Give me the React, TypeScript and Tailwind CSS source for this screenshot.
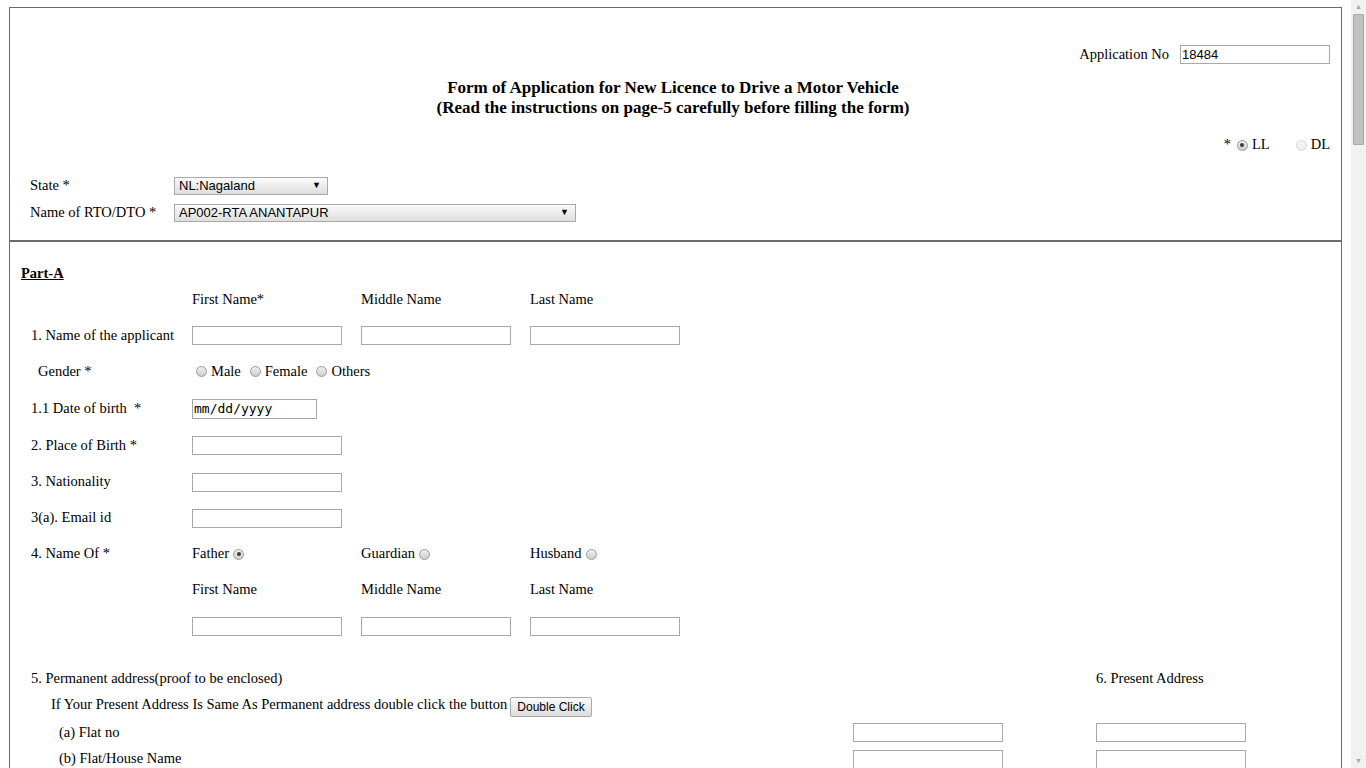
import React from "react";

function Radio({ checked = false, disabled = false }: { checked?: boolean; disabled?: boolean }) {
  return (
    <span
      className={
        "inline-flex items-center justify-center w-[11px] h-[11px] rounded-full border " +
        (disabled
          ? "border-[#d8d8d8] bg-linear-to-b from-[#f7f7f7] to-[#ececec]"
          : "border-[#9a9a9a] bg-linear-to-b from-[#f0f0f0] to-[#cdcdcd]")
      }
    >
      {checked && <span className="w-[4px] h-[4px] rounded-full bg-[#3a3a3a]" />}
    </span>
  );
}

function TextBox({ w = 150, value = "" }: { w?: number; value?: string }) {
  return (
    <input
      readOnly
      value={value}
      style={{ width: w }}
      className="block h-[19px] border border-[#a8a8a8] bg-white px-[1px] text-[13px] text-black font-['Liberation_Sans',_Arial,_sans-serif] outline-none"
    />
  );
}

function Select({ w, value }: { w: number; value: string }) {
  return (
    <div
      style={{ width: w }}
      className="h-[18px] border border-[#a9a9a9] bg-linear-to-b from-[#fbfbfb] to-[#dedede] flex items-center justify-between pl-[4px] pr-[6px] font-['Liberation_Sans',_Arial,_sans-serif] text-[13px] text-black"
    >
      <span>{value}</span>
      <span className="text-[9px] leading-none">▼</span>
    </div>
  );
}

function Row({ h, children, className = "" }: { h: number; children: React.ReactNode; className?: string }) {
  return (
    <div style={{ height: h }} className={"flex items-center " + className}>
      {children}
    </div>
  );
}

export default function App() {
  return (
    <div className="flex h-[768px] overflow-hidden bg-white text-black font-['Liberation_Serif',_'Times_New_Roman',_serif] text-[14.5px]">
      <div className="w-[1351px] pl-[9px] pr-[9px] pt-[7px]">
        {/* Top box */}
        <div className="border-t border-l border-r border-[#6b6b6b] border-b-2 pl-[20px] pr-[11px] pt-[37px] pb-[18px]">
          <div className="flex justify-end items-center h-[19px]">
            <span className="mr-[11px]">Application No</span>
            <TextBox w={150} value="18484" />
          </div>
          <div className="mt-[14px] pr-[14px] text-center font-bold text-[17px] leading-[20px]">
            <div>Form of Application for New Licence to Drive a Motor Vehicle</div>
            <div>(Read the instructions on page-5 carefully before filling the form)</div>
          </div>
          <div className="mt-[17px] h-[20px] flex justify-end items-center">
            <span className="mr-[6px]">*</span>
            <Radio checked />
            <span className="ml-[4px]">LL</span>
            <span className="ml-[26px] flex"><Radio disabled /></span>
            <span className="ml-[4px]">DL</span>
          </div>
          <div className="mt-[21px] flex items-center h-[19px]">
            <span className="w-[144px]">State *</span>
            <Select w={154} value="NL:Nagaland" />
          </div>
          <div className="mt-[8px] flex items-center h-[19px]">
            <span className="w-[144px]">Name of RTO/DTO *</span>
            <Select w={402} value="AP002-RTA ANANTAPUR" />
          </div>
        </div>

        {/* Part A */}
        <div className="border-l border-r border-[#6b6b6b] pl-[11px] pt-[19px] h-[600px]">
          <Row h={26}>
            <span className="font-bold underline">Part-A</span>
          </Row>
          <div className="pl-[10px]">
            <Row h={26}>
              <span className="w-[161px]" />
              <span className="w-[169px]">First Name*</span>
              <span className="w-[169px]">Middle Name</span>
              <span className="w-[169px]">Last Name</span>
            </Row>
            <div className="h-[5px]" />
            <Row h={35}>
              <span className="w-[161px]">1. Name of the applicant</span>
              <span className="w-[169px] flex"><TextBox /></span>
              <span className="w-[169px] flex"><TextBox /></span>
              <span className="w-[169px] flex"><TextBox /></span>
            </Row>
            <Row h={37}>
              <span className="w-[161px] pl-[7px]">Gender *</span>
              <span className="flex items-center">
                <span className="ml-[4px] flex"><Radio /></span>
                <span className="ml-[4px]">Male</span>
                <span className="ml-[9px] flex"><Radio /></span>
                <span className="ml-[4px]">Female</span>
                <span className="ml-[9px] flex"><Radio /></span>
                <span className="ml-[4px]">Others</span>
              </span>
            </Row>
            <Row h={37}>
              <span className="w-[161px]">1.1 Date of birth&nbsp; *</span>
              <input
                readOnly
                value="mm/dd/yyyy"
                className="block w-[125px] h-[20px] border border-[#a8a8a8] bg-white px-[1px] text-[13px] text-black font-['DejaVu_Sans_Mono',_monospace] outline-none"
              />
            </Row>
            <Row h={37}>
              <span className="w-[161px]">2. Place of Birth *</span>
              <TextBox />
            </Row>
            <Row h={36}>
              <span className="w-[161px]">3. Nationality</span>
              <TextBox />
            </Row>
            <Row h={36}>
              <span className="w-[161px]">3(a). Email id</span>
              <TextBox />
            </Row>
            <Row h={36}>
              <span className="w-[161px]">4. Name Of *</span>
              <span className="w-[169px] flex items-center gap-[4px]">Father <Radio checked /></span>
              <span className="w-[169px] flex items-center gap-[4px]">Guardian <Radio /></span>
              <span className="w-[169px] flex items-center gap-[4px]">Husband <Radio /></span>
            </Row>
            <Row h={36}>
              <span className="w-[161px]" />
              <span className="w-[169px]">First Name</span>
              <span className="w-[169px]">Middle Name</span>
              <span className="w-[169px]">Last Name</span>
            </Row>
            <Row h={36}>
              <span className="w-[161px]" />
              <span className="w-[169px] flex"><TextBox /></span>
              <span className="w-[169px] flex"><TextBox /></span>
              <span className="w-[169px] flex"><TextBox /></span>
            </Row>
            <div className="h-[23px]" />
            <Row h={24}>
              <span className="w-[1065px]">5. Permanent address(proof to be enclosed)</span>
              <span>6. Present Address</span>
            </Row>
            <Row h={28}>
              <span className="pl-[20px]">If Your Present Address Is Same As Permanent address double click the button</span>
              <button className="ml-[3px] mt-[3px] h-[20px] px-[6px] border border-[#a9a9a9] rounded-[2px] bg-linear-to-b from-[#fbfbfb] to-[#dcdcdc] text-[12px] font-['Liberation_Sans',_Arial,_sans-serif] text-black">
                Double Click
              </button>
            </Row>
            <Row h={27}>
              <span className="w-[822px] pl-[28px]">(a) Flat no</span>
              <span className="w-[243px] flex"><TextBox /></span>
              <TextBox />
            </Row>
            <Row h={26}>
              <span className="w-[822px] pl-[28px]">(b) Flat/House Name</span>
              <span className="w-[243px] flex"><TextBox /></span>
              <TextBox />
            </Row>
          </div>
        </div>
      </div>

      {/* scrollbar */}
      <div className="w-[15px] h-full bg-[#f1f1f1] flex flex-col items-center">
        <div className="h-[14px] flex items-center justify-center text-[7px] text-[#a3a3a3] leading-none">▲</div>
        <div className="w-[11px] h-[131px] bg-[#c1c1c1] border border-[#a8a8a8] rounded-[1px]" />
        <div className="flex-1" />
        <div className="h-[14px] flex items-center justify-center text-[7px] text-[#a3a3a3] leading-none">▼</div>
      </div>
    </div>
  );
}
